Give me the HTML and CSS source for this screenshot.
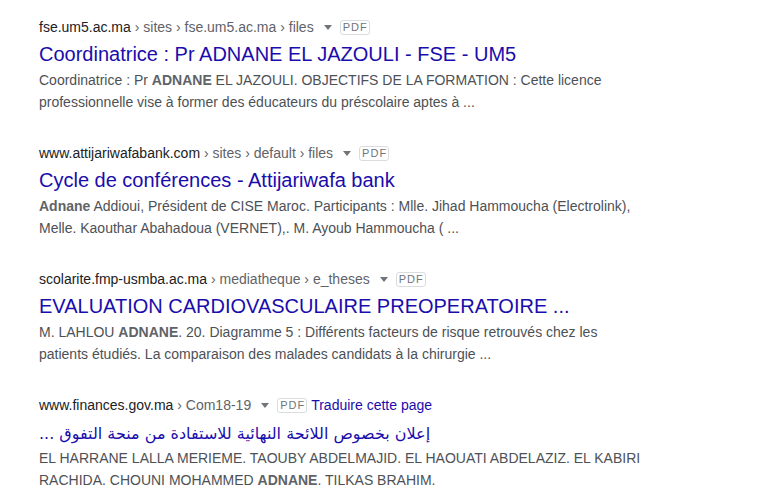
FILE: index.html
```html
<!DOCTYPE html>
<html lang="fr">
<head>
<meta charset="utf-8">
<title>Résultats</title>
<link rel="stylesheet" href="styles.css">
</head>
<body>
<div class="results">
  <div class="result">
    <div class="cite"><span class="domain">fse.um5.ac.ma</span><span class="crumb"> › sites › fse.um5.ac.ma › files</span><span class="arrow"></span><span class="badge">PDF</span></div>
    <h3 class="title">Coordinatrice : Pr ADNANE EL JAZOULI - FSE - UM5</h3>
    <div class="snippet">Coordinatrice : Pr <b>ADNANE</b> EL JAZOULI. OBJECTIFS DE LA FORMATION : Cette licence<br>professionnelle vise à former des éducateurs du préscolaire aptes à ...</div>
  </div>
  <div class="result">
    <div class="cite"><span class="domain">www.attijariwafabank.com</span><span class="crumb"> › sites › default › files</span><span class="arrow"></span><span class="badge">PDF</span></div>
    <h3 class="title">Cycle de conférences - Attijariwafa bank</h3>
    <div class="snippet"><b>Adnane</b> Addioui, Président de CISE Maroc. Participants : Mlle. Jihad Hammoucha (Electrolink),<br>Melle. Kaouthar Abahadoua (VERNET),. M. Ayoub Hammoucha ( ...</div>
  </div>
  <div class="result">
    <div class="cite"><span class="domain">scolarite.fmp-usmba.ac.ma</span><span class="crumb"> › mediatheque › e_theses</span><span class="arrow"></span><span class="badge">PDF</span></div>
    <h3 class="title">EVALUATION CARDIOVASCULAIRE PREOPERATOIRE ...</h3>
    <div class="snippet">M. LAHLOU <b>ADNANE</b>. 20. Diagramme 5 : Différents facteurs de risque retrouvés chez les<br>patients étudiés. La comparaison des malades candidats à la chirurgie ...</div>
  </div>
  <div class="result">
    <div class="cite"><span class="domain">www.finances.gov.ma</span><span class="crumb"> › Com18-19</span><span class="arrow"></span><span class="badge">PDF</span><a class="translate" href="#">Traduire cette page</a></div>
    <h3 class="title"><span class="ar" dir="rtl" lang="ar">إعلان بخصوص اللائحة النهائية للاستفادة من منحة التفوق ...</span></h3>
    <div class="snippet">EL HARRANE LALLA MERIEME. TAOUBY ABDELMAJID. EL HAOUATI ABDELAZIZ. EL KABIRI<br>RACHIDA. CHOUNI MOHAMMED <b>ADNANE</b>. TILKAS BRAHIM.</div>
  </div>
</div>
</body>
</html>
```
FILE: styles.css
```css
html, body {
  margin: 0;
  padding: 0;
  background: #ffffff;
}
body {
  font-family: "Liberation Sans", Arial, "DejaVu Sans", sans-serif;
  color: #4d5156;
}
.results {
  padding: 16px 0 0 39px;
  display: flex;
  flex-direction: column;
  gap: 29px;
}
.result {
  display: flex;
  flex-direction: column;
}
.cite {
  display: flex;
  align-items: center;
  font-size: 14px;
  line-height: 22px;
  height: 22px;
  white-space: pre;
}
.domain {
  color: #202124;
}
.crumb {
  color: #5f6368;
}
.arrow {
  width: 0;
  height: 0;
  border-style: solid;
  border-width: 5px 4px 0 4px;
  border-color: #70757a transparent transparent transparent;
  margin: 1px 8px 0 10px;
}
.badge {
  box-sizing: border-box;
  height: 15px;
  width: 30px;
  border: 1px solid #dadce0;
  border-radius: 3px;
  font-size: 11px;
  line-height: 13px;
  letter-spacing: 1px;
  color: #70757a;
  text-align: center;
  padding-left: 1px;
  margin-top: 1px;
}
.translate {
  color: #1a0dab;
  text-decoration: none;
  margin-left: 4px;
}
.title {
  margin: 3px 0 0 0;
  font-size: 20px;
  font-weight: normal;
  line-height: 26px;
  height: 26px;
  color: #1a0dab;
  white-space: nowrap;
}
.ar {
  font-family: "DejaVu Sans", "Liberation Sans", sans-serif;
  font-size: 16px;
}
.snippet {
  margin-top: 2px;
  font-size: 14px;
  line-height: 22px;
  color: #4d5156;
}
.snippet b {
  color: #5f6368;
  font-weight: bold;
}
```
